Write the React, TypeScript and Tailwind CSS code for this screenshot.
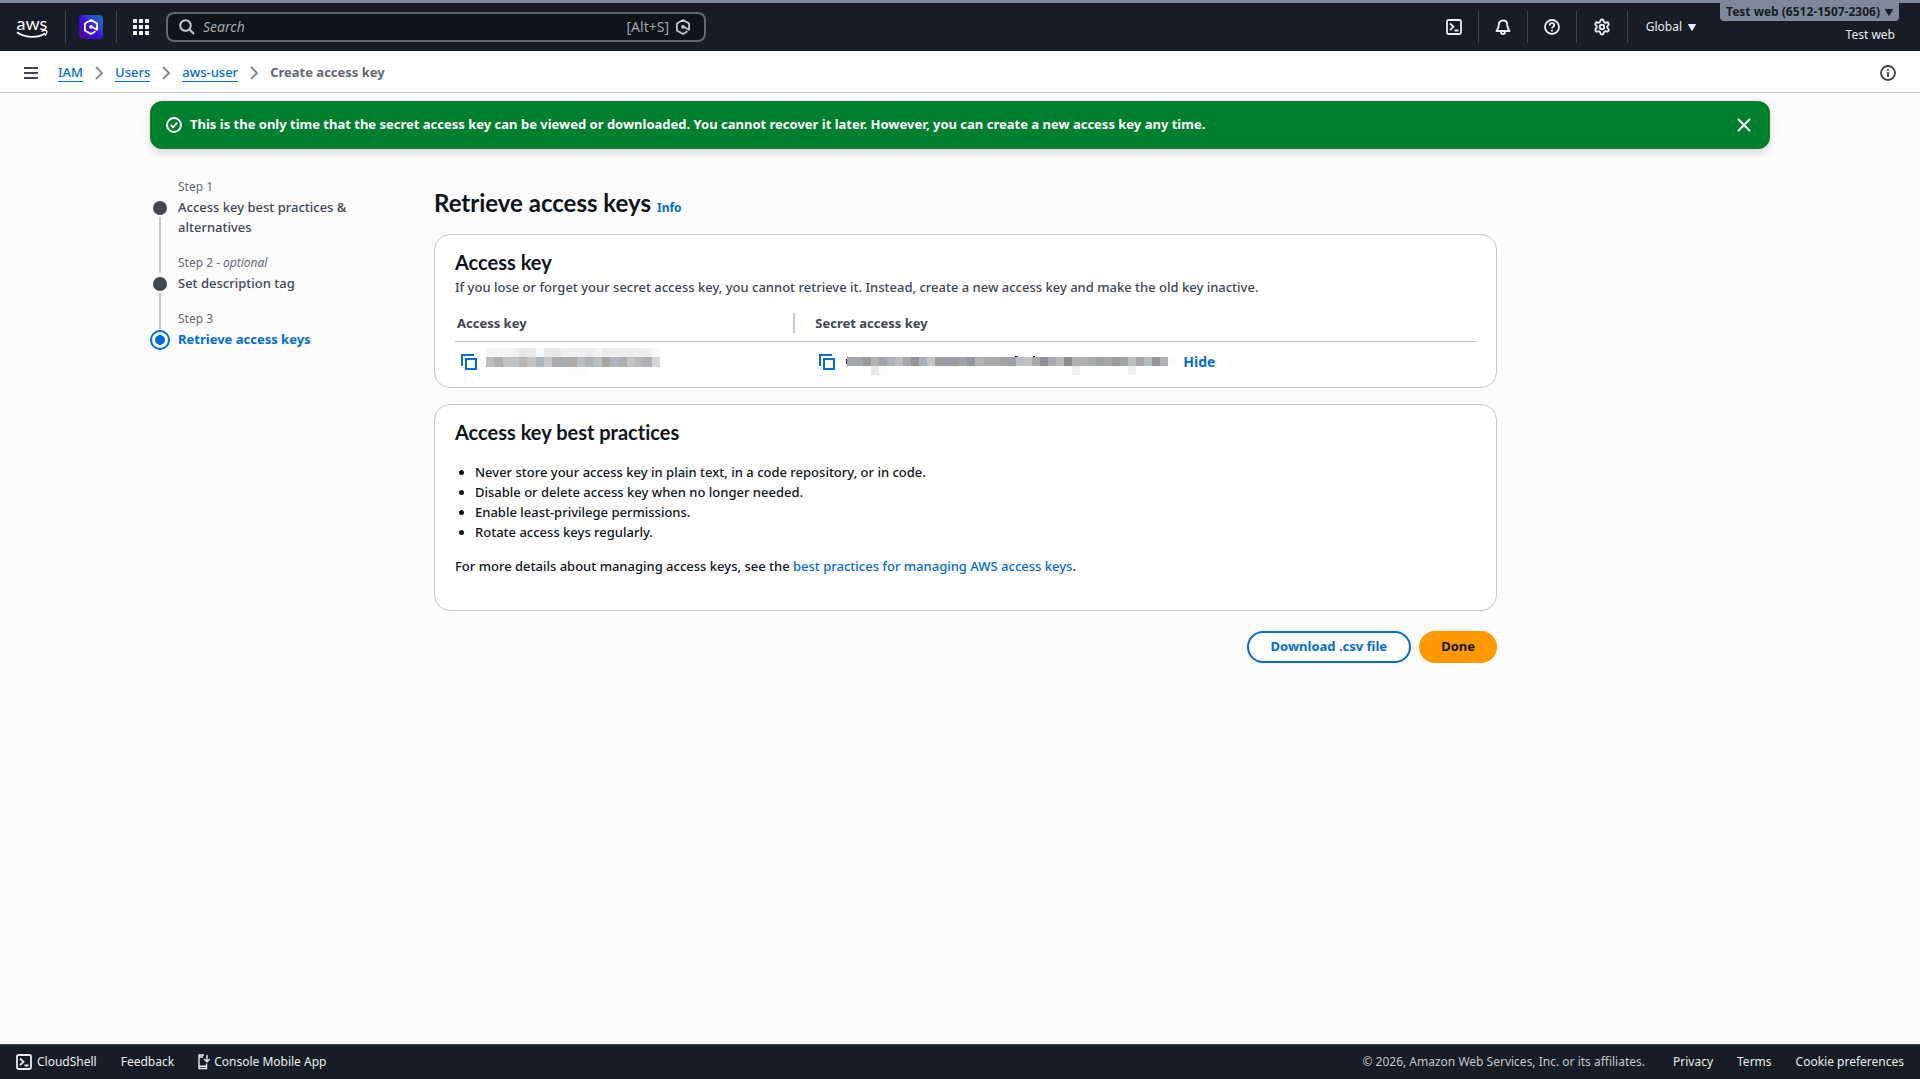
import React from 'react';
import { Settings } from 'lucide-react';

interface IconProps {
  className?: string;
}

interface Step {
  label: string;
  optional?: boolean;
  title: string;
  active?: boolean;
}

const steps: Step[] = [
  { label: 'Step 1', title: 'Access key best practices & alternatives' },
  { label: 'Step 2', optional: true, title: 'Set description tag' },
  { label: 'Step 3', title: 'Retrieve access keys', active: true },
];

const breadcrumbs = ['IAM', 'Users', 'aws-user'];

const practices = [
  'Never store your access key in plain text, in a code repository, or in code.',
  'Disable or delete access key when no longer needed.',
  'Enable least-privilege permissions.',
  'Rotate access keys regularly.',
];

// Colours of the redaction blocks, left to right
const keyTop = [
  '#f5f5f5', '#f4f4f3', '#f5f6f8', '#f3f1f0', '#e5e8e7', '#e9eaea', '#f4f7fb', '#e9e9ea', '#e9e9ea', '#f2f0ef', '#edeeee',
  '#eeefee', '#ebecee', '#f1f1f0', '#e9ecea', '#eeefee', '#eeeeee', '#ebeeed', '#eeefef', '#eeeff1', '#f9f9f9',
];
const keyBottom = [
  '#bfbdbb', '#aeafb0', '#c3c3c2', '#c0c3c7', '#b8b6b4', '#c5c3c2', '#adb7c2', '#c4c6c7', '#aaabaf', '#a9abad', '#b0a9a7',
  '#b8bdc6', '#afb1b3', '#b9c0c5', '#a9a5a1', '#b0b5be', '#acaeb2', '#c2c4c6', '#bbb9b7', '#aeb0b3', '#d4d5da',
];
const secretBlocks = [
  '#a1a7ad', '#a3a5a8', '#9b9a98', '#b2b3b0', '#a1a8ad', '#b0b2b6', '#bbbcbf', '#a6a7ad', '#959393', '#abb3bd',
  '#c5c4c2', '#a09f9c', '#989da6', '#9d9d9f', '#a0a4a8', '#93999d', '#b1b3b5', '#ababac', '#aaaaab', '#a3a3a4',
  '#9fa0a3', '#bac1c6', '#bfc1c2', '#acaba7', '#8e9095', '#aaacb2', '#b8b9ba', '#8b8b8e', '#b0b1b1', '#adafb1',
  '#a7abaa', '#9fa2a4', '#a9a9ab', '#9c9c9e', '#9fa3a4', '#babfc0', '#a6a4a7', '#b4bdc0', '#969698', '#b1b2b5',
  '#fbfcff',
];

function AwsLogo() {
  return (
    <a href="#home" aria-label="AWS Management Console" className="flex w-8 flex-col items-center">
      <span className="h-3.5 font-[Lato,sans-serif] text-[18px] leading-3.5 text-white">aws</span>
      <svg viewBox="0 0 32 8" className="h-2 w-8" fill="none" stroke="white">
        <path d="M1 2.2c8 5.6 20 6.2 28 1.2" strokeWidth="1.8" />
        <path d="M25.5 1.3c2-.8 4.6-.8 5.2-.3s-.2 3-1.7 4.6" strokeWidth="1.3" />
      </svg>
    </a>
  );
}

function HexagonShape({ className }: IconProps) {
  return (
    <svg viewBox="0 0 16 16" className={className} fill="none" stroke="currentColor" strokeWidth="1.8">
      <path d="M12.5 12.3 8 15 1.9 11.5v-7L8 1l6.100 3.500v6.300L8.500 7.800" strokeLinejoin="round" />
      <circle cx="8" cy="7.8" r="1.9" fill="currentColor" stroke="none" />
    </svg>
  );
}

function GridIcon() {
  return (
    <svg viewBox="0 0 16 16" className="size-4" fill="#f9f9fa">
      {[0, 6, 12].map(y => [0, 6, 12].map(x => <rect key={`${x}-${y}`} x={x} y={y} width="4" height="4" rx="0.5" />))}
    </svg>
  );
}

function SearchIcon() {
  return (
    <svg viewBox="0 0 16 16" className="size-4" fill="none" stroke="#c6c6cd" strokeWidth="2">
      <circle cx="6.5" cy="6.5" r="5.3" />
      <path d="m10.5 10.5 4.5 4.5" />
    </svg>
  );
}

function ShellIcon({ className }: IconProps) {
  return (
    <svg viewBox="0 0 16 16" className={className} fill="none" stroke="currentColor" strokeWidth="1.8">
      <rect x="1" y="1" width="14" height="14" rx="1.5" />
      <path d="m4 4.500 3.500 3.300L4 11.200M8.500 11.500h4" />
    </svg>
  );
}

function BellIcon() {
  return (
    <svg viewBox="0 0 16 16" className="size-4" fill="none" stroke="currentColor" strokeWidth="1.9" strokeLinejoin="round">
      <path d="M8 1.500c-2.600 0-4.200 1.900-4.200 4.300C3.800 9 2.800 10.200 1.500 12h13c-1.300-1.800-2.300-3-2.300-6.200 0-2.400-1.600-4.300-4.200-4.300Z" />
      <path d="M6 13c0 1.200.8 2 2 2s2-.8 2-2" />
    </svg>
  );
}

function HelpIcon() {
  return (
    <svg viewBox="0 0 16 16" className="size-4" fill="none" stroke="currentColor" strokeWidth="1.8">
      <circle cx="8" cy="8" r="7" />
      <path d="M5.700 6.500C5.700 5.100 6.700 4.200 8 4.200s2.300.8 2.300 2c0 1.500-2.300 1.600-2.300 3.400" />
      <path d="M8 10.700v1.700" />
    </svg>
  );
}

function InfoIcon() {
  return (
    <svg viewBox="0 0 16 16" className="size-4" fill="none" stroke="currentColor" strokeWidth="1.8">
      <circle cx="8" cy="8" r="7" />
      <path d="M8 7v5M8 4v1.800" />
    </svg>
  );
}

function CheckCircleIcon() {
  return (
    <svg viewBox="0 0 16 16" className="size-4 shrink-0" fill="none" stroke="currentColor" strokeWidth="1.9">
      <circle cx="8" cy="8" r="7" />
      <path d="m4.700 7.800 2.400 2.400 4.200-4.600" />
    </svg>
  );
}

function CopyIcon() {
  return (
    <svg viewBox="0 0 16 16" className="size-4" fill="none" stroke="currentColor" strokeWidth="2">
      <path d="M1 12V1h12" />
      <rect x="5" y="5" width="10" height="10" />
    </svg>
  );
}

function PhoneIcon() {
  return (
    <svg viewBox="0 0 12 16" className="h-4 w-3" fill="none" stroke="currentColor" strokeWidth="1.4">
      <path d="M6 1H1v13.500h7.500V9.500M1 3h4M1 12.200h7.500" />
      <path d="M9 1v6.500M6.200 5 9 7.800 11.800 5" />
    </svg>
  );
}

function Caret() {
  return (
    <svg viewBox="0 0 8 7" className="h-[7px] w-2" fill="currentColor" stroke="currentColor" strokeWidth="1" strokeLinejoin="round">
      <path d="M.5.5h7L4 6.500Z" />
    </svg>
  );
}

function CopyButton({ label }: { label: string }) {
  return (
    <button type="button" aria-label={label} className="text-[#006ce0]">
      <CopyIcon />
    </button>
  );
}

function HiddenKey() {
  return (
    <svg viewBox="0 0 174 28" className="h-7 w-[174px]" shapeRendering="crispEdges">
      {keyTop.map((color, i) => (
        <rect key={i} x={i * 8.286} y="0" width="8.4" height="9" fill={color} />
      ))}
      {keyBottom.map((color, i) => (
        <rect key={i} x={i * 8.286} y="9" width="8.4" height="10" fill={color} />
      ))}
      <rect x="83" y="19" width="17" height="8" fill="#fcfcfd" />
    </svg>
  );
}

function HiddenSecret() {
  return (
    <svg viewBox="0 0 330 20" className="h-5 w-[330px]" shapeRendering="crispEdges">
      <rect x="0" y="4" width="3" height="5" fill="#33261c" />
      <rect x="169" y="1" width="3" height="1" fill="#222222" />
      <rect x="187" y="1" width="2" height="1" fill="#222222" />
      {secretBlocks.map((color, i) => (
        <rect key={i} x={1 + i * 8.03} y="2" width="8.2" height="9" fill={color} />
      ))}
      <rect x="25" y="11" width="8" height="9" fill="#eae8e9" />
      <rect x="33" y="11" width="8" height="9" fill="#fbfcff" />
      <rect x="226" y="11" width="8" height="9" fill="#efefef" />
      <rect x="282" y="11" width="8" height="9" fill="#eff1f0" />
    </svg>
  );
}

function TopNav() {
  return (
    <header className="flex h-[51px] items-stretch border-t-[3px] border-[#7d8998] bg-[#161d26] text-[#ebebf0]">
      <div className="flex items-center pl-4">
        <AwsLogo />
        <span className="ml-[17px] h-8 w-px bg-[#424650]" />
        <button
          type="button"
          aria-label="Amazon Q"
          className="ml-[13px] flex size-6 items-center justify-center rounded bg-linear-to-tr from-[#4c008f] via-[#3a0fd6] to-[#0073c8] text-white"
        >
          <HexagonShape className="size-4" />
        </button>
        <span className="ml-[13px] h-8 w-px bg-[#424650]" />
        <button type="button" aria-label="Services" className="ml-4">
          <GridIcon />
        </button>
        <div className="ml-[17px] flex h-[30px] w-[540px] items-center rounded-lg border-2 border-[#656871] bg-[#0f141a] px-[11px]">
          <SearchIcon />
          <input
            type="search"
            aria-label="Search"
            placeholder="Search"
            className="ml-2 min-w-0 flex-1 bg-transparent text-sm outline-none placeholder:italic placeholder:text-[#a4a4ad]"
          />
          <span className="text-sm text-[#a4a4ad]">[Alt+S]</span>
          <HexagonShape className="mr-0.5 ml-1.5 size-4 text-[#c6c6cd]" />
        </div>
      </div>
      <div className="ml-auto flex items-center">
        <button type="button" aria-label="CloudShell" className="px-4">
          <ShellIcon className="size-4" />
        </button>
        <span className="h-8 w-px bg-[#424650]" />
        <button type="button" aria-label="Notifications" className="px-4">
          <BellIcon />
        </button>
        <span className="h-8 w-px bg-[#424650]" />
        <button type="button" aria-label="Support" className="px-4">
          <HelpIcon />
        </button>
        <span className="h-8 w-px bg-[#424650]" />
        <button type="button" aria-label="Settings" className="px-4">
          <Settings className="size-[18px]" strokeWidth={2.5} />
        </button>
        <span className="h-8 w-px bg-[#424650]" />
        <button type="button" className="flex items-center gap-1.5 pr-6 pl-[18px] text-xs">
          Global <Caret />
        </button>
      </div>
      <div className="flex flex-col items-end pr-[21px]">
        <button type="button" className="flex h-[18px] items-center gap-[5px] rounded-b bg-[#7d8998] px-1.5 text-xs font-bold text-[#161d26]">
          Test web (6512-1507-2306) <Caret />
        </button>
        <span className="mt-1.5 pr-1 text-xs leading-4">Test web</span>
      </div>
    </header>
  );
}

function Breadcrumbs() {
  return (
    <div className="flex h-[42px] items-center border-b border-[#c6c6cd] bg-white px-6 pt-0.5 text-[#424650]">
      <button type="button" aria-label="Open navigation" className="flex w-3.5 flex-col gap-[3px]">
        <span className="h-0.5 bg-current" />
        <span className="h-0.5 bg-current" />
        <span className="h-0.5 bg-current" />
      </button>
      <nav aria-label="Breadcrumbs" className="ml-5 flex items-center text-[13px]">
        {breadcrumbs.map(item => (
          <React.Fragment key={item}>
            <a href={`#${item}`} className="border-b border-[#006ce0] leading-[18px] font-medium text-[#006ce0]">
              {item}
            </a>
            <svg viewBox="0 0 8 14" className="mx-3 h-3.5 w-2" fill="none" stroke="#8c8c94" strokeWidth="2">
              <path d="m1 1 6 6-6 6" />
            </svg>
          </React.Fragment>
        ))}
        <span className="font-bold text-[#656871]">Create access key</span>
      </nav>
      <button type="button" aria-label="Info" className="ml-auto">
        <InfoIcon />
      </button>
    </div>
  );
}

function Flash() {
  return (
    <div className="flex h-12 items-center gap-2 rounded-xl bg-[#00802f] px-4 text-white shadow-[0_4px_10px_rgba(0,7,22,0.15)]">
      <CheckCircleIcon />
      <p className="text-[13px] font-bold">
        This is the only time that the secret access key can be viewed or downloaded. You cannot recover it later.
        However, you can create a new access key any time.
      </p>
      <button type="button" aria-label="Dismiss" className="ml-auto pr-[3px]">
        <svg viewBox="0 0 14 14" className="size-3.5" fill="none" stroke="currentColor" strokeWidth="2">
          <path d="m1 1 12 12M13 1 1 13" />
        </svg>
      </button>
    </div>
  );
}

function StepList() {
  return (
    <ol className="text-[13px] leading-5 text-[#424650]">
      {steps.map((step, i) => (
        <li key={step.label} className="flex gap-2">
          <div className="flex w-5 shrink-0 flex-col items-center">
            <span className={`h-5 w-0.5 ${i > 0 ? 'bg-[#c6c6cd]' : ''}`} />
            <span className="flex h-5 items-center pt-0.5">
              {step.active ? (
                <span className="flex size-5 items-center justify-center rounded-full border-2 border-[#006ce0]">
                  <span className="size-2.5 rounded-full bg-[#006ce0]" />
                </span>
              ) : (
                <span className="size-3.5 rounded-full bg-[#424650]" />
              )}
            </span>
            {!step.active && <span className="w-0.5 flex-1 bg-[#c6c6cd]" />}
          </div>
          <div className="w-[190px] pb-4">
            <div className="text-xs leading-5 text-[#656871]">
              {step.label}
              {step.optional && <i> - optional</i>}
            </div>
            <div className={step.active ? 'font-bold text-[#006ce0]' : 'font-medium'}>{step.title}</div>
          </div>
        </li>
      ))}
    </ol>
  );
}

function AccessKeyCard() {
  return (
    <section className="rounded-2xl border border-[#c6c6cd] bg-white px-5 pt-[15px] pb-[5px]">
      <h2 className="font-[Lato,sans-serif] text-xl leading-6 font-bold">Access key</h2>
      <p className="mt-[3px] text-[13px] leading-5 font-medium text-[#424650]">
        If you lose or forget your secret access key, you cannot retrieve it. Instead, create a new access key and make
        the old key inactive.
      </p>
      <table className="mt-4 w-full table-fixed text-left text-[13px]">
        <thead>
          <tr className="border-b border-[#c6c6cd] text-[#424650]">
            <th scope="col" className="w-1/3 pb-2">
              <div className="border-r-2 border-[#c6c6cd] pl-0.5 leading-5">Access key</div>
            </th>
            <th scope="col" className="pb-2 pl-5 leading-5">
              Secret access key
            </th>
          </tr>
        </thead>
        <tbody>
          <tr>
            <td className="h-10 p-0">
              <div className="flex h-10 items-center gap-[9px] pl-1.5">
                <CopyButton label="Copy access key" />
                <HiddenKey />
              </div>
            </td>
            <td className="h-10 p-0">
              <div className="flex h-10 items-center gap-[11px] pl-6">
                <CopyButton label="Copy secret access key" />
                <span className="pt-1.5">
                  <HiddenSecret />
                </span>
                <button type="button" className="-ml-1 text-sm font-bold text-[#006ce0]">
                  Hide
                </button>
              </div>
            </td>
          </tr>
        </tbody>
      </table>
    </section>
  );
}

function BestPracticesCard() {
  return (
    <section className="mt-4 rounded-2xl border border-[#c6c6cd] bg-white px-5 pt-[15px] pb-[34px] text-[13px] leading-5 font-medium">
      <h2 className="font-[Lato,sans-serif] text-xl leading-6 font-bold">Access key best practices</h2>
      <ul className="mt-[18px] list-disc pl-5">
        {practices.map(practice => (
          <li key={practice}>{practice}</li>
        ))}
      </ul>
      <p className="mt-3.5">
        For more details about managing access keys, see the{' '}
        <a href="#best-practices" className="text-[#006ce0]">
          best practices for managing AWS access keys
        </a>
        .
      </p>
    </section>
  );
}

function Footer() {
  return (
    <footer className="flex h-[35px] items-center border-t border-[#424650] bg-[#161d26] px-4 text-xs text-[#ebebf0]">
      <button type="button" className="flex items-center gap-[5px]">
        <ShellIcon className="size-4" /> CloudShell
      </button>
      <a href="#feedback" className="ml-6">Feedback</a>
      <a href="#mobile" className="ml-6 flex items-center gap-1">
        <PhoneIcon /> Console Mobile App
      </a>
      <span className="ml-auto text-[#c6c6cd]">© 2026, Amazon Web Services, Inc. or its affiliates.</span>
      <a href="#privacy" className="ml-7">Privacy</a>
      <a href="#terms" className="ml-6">Terms</a>
      <a href="#cookies" className="ml-6">Cookie preferences</a>
    </footer>
  );
}

export default function App() {
  return (
    <div className="flex min-h-screen flex-col bg-[#fcfcfd] font-['Noto_Sans',sans-serif] text-[#0f141a] [font-variant-ligatures:none]">
      <TopNav />
      <Breadcrumbs />
      <main className="mx-auto w-full max-w-[1620px] flex-1 pt-2">
        <Flash />
        <div className="mt-7 grid grid-cols-[284px_minmax(0,1063px)]">
          <StepList />
          <div className="pt-[11px]">
            <div className="flex items-baseline gap-1.5">
              <h1 className="font-[Lato,sans-serif] text-2xl leading-[30px] font-bold">Retrieve access keys</h1>
              <a href="#info" className="text-xs font-bold text-[#006ce0]">Info</a>
            </div>
            <div className="mt-4">
              <AccessKeyCard />
              <BestPracticesCard />
            </div>
            <div className="mt-5 flex justify-end gap-2 text-[13px] font-bold">
              <button type="button" className="h-8 rounded-full border-2 border-[#006ce0] bg-white px-[22px] text-[#006ce0]">
                Download .csv file
              </button>
              <button type="button" className="h-8 rounded-full bg-[#ff9900] px-[22px]">
                Done
              </button>
            </div>
          </div>
        </div>
      </main>
      <Footer />
    </div>
  );
}
